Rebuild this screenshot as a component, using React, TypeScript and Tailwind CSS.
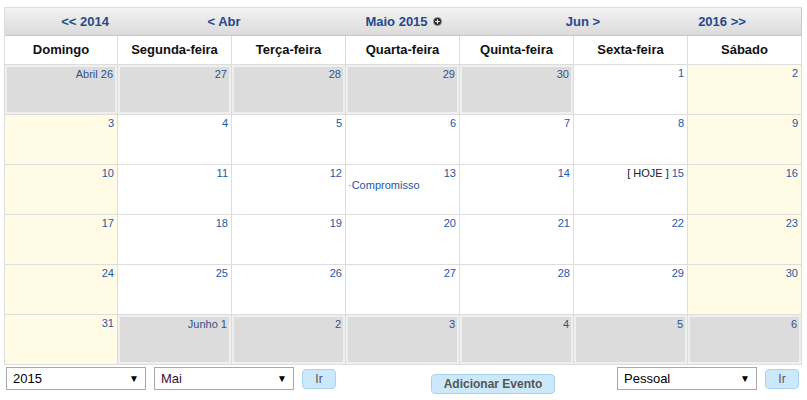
import React from 'react';

type Cell = { label: string; other?: boolean; weekend?: boolean; today?: boolean; event?: string };

const dayNames = ['Domingo', 'Segunda-feira', 'Terça-feira', 'Quarta-feira', 'Quinta-feira', 'Sexta-feira', 'Sábado'];

function buildWeeks(): Cell[][] {
  const weeks: Cell[][] = [];
  const first: Cell[] = ['Abril 26', '27', '28', '29', '30'].map(l => ({ label: l, other: true }));
  first.push({ label: '1' }, { label: '2', weekend: true });
  weeks.push(first);
  let d = 3;
  for (let w = 0; w < 4; w++) {
    const row: Cell[] = [];
    for (let i = 0; i < 7; i++) {
      row.push({
        label: String(d),
        weekend: i === 0 || i === 6,
        today: d === 15,
        event: d === 13 ? 'Compromisso' : undefined,
      });
      d++;
    }
    weeks.push(row);
  }
  const last: Cell[] = [{ label: '31', weekend: true }];
  ['Junho 1', '2', '3', '4', '5', '6'].forEach(l => last.push({ label: l, other: true }));
  weeks.push(last);
  return weeks;
}

function Select({ value, className }: { value: string; className?: string }) {
  return (
    <div className={`flex h-[23px] w-[140px] items-center justify-between border border-[#a9a9a9] bg-white pl-[6px] pr-[6px] text-[13px] ${className ?? 'text-black'}`}>
      <span>{value}</span>
      <span className="text-[10px] text-black">▼</span>
    </div>
  );
}

function IrButton() {
  return (
    <button className="h-[20px] w-[34px] rounded-[4px] border border-[#a6d3f2] bg-[#cce8fb] text-[12px] text-[#555]">
      Ir
    </button>
  );
}

export default function App() {
  const weeks = buildWeeks();

  return (
    <div className="h-[400px] w-[807px] bg-white pl-[4px] pt-[7px]" style={{ fontFamily: '"Liberation Sans", Arial, sans-serif' }}>
      <div className="w-[798px] border-l border-t border-[#dddddd]">
        {/* nav bar */}
        <div className="grid h-[28px] grid-cols-[160px_118px_241px_118px_160px] items-center border-b border-r border-[#c8c8c8] bg-gradient-to-b from-[#f3f3f3] to-[#dbdbdb] text-[13px] font-bold text-[#244a8c]">
          <span className="text-center">&lt;&lt; 2014</span>
          <span className="text-center">&lt; Abr</span>
          <span className="flex items-center justify-center gap-[5px]">
            Maio 2015
            <svg width="9" height="9" viewBox="0 0 9 9">
              <circle cx="4.5" cy="4.5" r="4" fill="#222" />
              <circle cx="4.5" cy="4.5" r="4" fill="none" stroke="#999" strokeWidth="0.8" />
              <path d="M4.5 2.2v4.6M2.2 4.5h4.6" stroke="#fff" strokeWidth="1.2" />
            </svg>
          </span>
          <span className="text-center">Jun &gt;</span>
          <span className="text-center">2016 &gt;&gt;</span>
        </div>

        {/* day names */}
        <div className="grid grid-cols-[113px_repeat(6,114px)]">
          {dayNames.map(n => (
            <div key={n} className="flex h-[29px] items-center justify-center border-b border-r border-[#dddddd] text-[13px] font-bold text-[#111]">
              {n}
            </div>
          ))}
        </div>

        {/* weeks */}
        {weeks.map((row, wi) => (
          <div key={wi} className="grid grid-cols-[113px_repeat(6,114px)]">
            {row.map((c, ci) => (
              <div
                key={ci}
                className={`h-[50px] border-b border-r border-[#dddddd] px-[2px] pt-[1px] ${
                  c.other
                    ? 'bg-[#dcdcdc] shadow-[inset_0_0_0_2px_#efefef]'
                    : c.weekend
                    ? 'bg-[#fffbe5]'
                    : 'bg-white'
                }`}
              >
                <div className={`pr-[1px] pt-[1px] text-right text-[11px] leading-[13px] ${c.other ? 'pr-[2px] pt-[2px] text-[#34508a]' : 'text-[#2259a5]'}`}>
                  {c.today && <span className="text-[#222]">[ HOJE ] </span>}
                  {c.label}
                </div>
                {c.event && (
                  <div className="-mt-[1px] text-[11px] leading-[13px] text-[#2259a5]">
                    <span className="text-[#777]">·</span>
                    {c.event}
                  </div>
                )}
              </div>
            ))}
          </div>
        ))}
      </div>

      {/* controls */}
      <div className="mt-[2px] flex items-start">
        <div className="ml-[2px] flex items-center gap-[8px]">
          <Select value="2015" />
          <Select value="Mai" className="text-[#3a0f2e]" />
          <IrButton />
        </div>
        <button className="ml-[95px] mt-[7px] h-[20px] w-[124px] rounded-[4px] border border-[#a6d3f2] bg-[#cce8fb] text-[12px] font-bold text-[#555]">
          Adicionar Evento
        </button>
        <div className="ml-[62px] flex items-center gap-[8px]">
          <Select value="Pessoal" />
          <IrButton />
        </div>
      </div>
    </div>
  );
}
